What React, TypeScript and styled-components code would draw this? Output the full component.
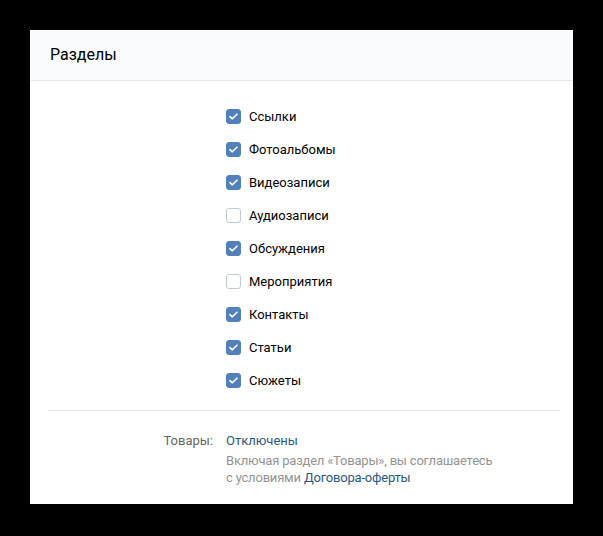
import React from 'react'
import styled, { createGlobalStyle } from 'styled-components'

const GlobalStyle = createGlobalStyle`
  html, body {
    margin: 0;
    padding: 0;
    background: #000;
  }
  body {
    font-family: Roboto, "Open Sans", "Liberation Sans", sans-serif;
    -webkit-font-smoothing: antialiased;
  }
`

const Screen = styled.div`
  width: 603px;
  height: 536px;
  padding: 30px 30px 32px 30px;
  box-sizing: border-box;
`

const Panel = styled.div`
  width: 543px;
  height: 474px;
  background: #fff;
  display: flex;
  flex-direction: column;
`

const Header = styled.div`
  height: 51px;
  box-sizing: border-box;
  background: #fafbfc;
  border-bottom: 1px solid #e7e8ec;
  display: flex;
  align-items: center;
  padding: 0 20px 2px;
  font-size: 16px;
  color: #000;
`

const Body = styled.div`
  padding: 19px 13px 0 18px;
  display: flex;
  flex-direction: column;
`

const CheckList = styled.div`
  display: flex;
  flex-direction: column;
  padding-left: 178px;
`

const CheckRow = styled.label`
  height: 33px;
  display: flex;
  align-items: center;
  gap: 8px;
  font-size: 13px;
  color: #000;
  cursor: pointer;
`

const Box = styled.span<{ $checked: boolean }>`
  width: 15px;
  height: 15px;
  box-sizing: border-box;
  border-radius: 3px;
  display: flex;
  align-items: center;
  justify-content: center;
  background: ${({ $checked }) => ($checked ? '#5181b8' : '#fff')};
  border: 1px solid ${({ $checked }) => ($checked ? '#5181b8' : '#c1c9d1')};
`

const Divider = styled.div`
  height: 1px;
  background: #e7e8ec;
  margin-top: 13px;
`

const InfoRow = styled.div`
  display: flex;
  padding-top: 21px;
  font-size: 13px;
`

const InfoLabel = styled.div`
  width: 178px;
  padding-right: 13px;
  box-sizing: border-box;
  text-align: right;
  color: #656565;
  line-height: 17px;
`

const InfoValue = styled.div`
  display: flex;
  flex-direction: column;
`

const Link = styled.a`
  color: #2a5885;
  text-decoration: none;
  line-height: 17px;
`

const Note = styled.div`
  margin-top: 4px;
  color: #939393;
  line-height: 16px;
  letter-spacing: -0.2px;
  width: 270px;
`

const sections: [string, boolean][] = [
  ['Ссылки', true],
  ['Фотоальбомы', true],
  ['Видеозаписи', true],
  ['Аудиозаписи', false],
  ['Обсуждения', true],
  ['Мероприятия', false],
  ['Контакты', true],
  ['Статьи', true],
  ['Сюжеты', true],
]

function Checkbox({ checked }: { checked: boolean }) {
  return (
    <Box $checked={checked}>
      {checked && (
        <svg width="9" height="7" viewBox="0 0 9 7" fill="none">
          <path d="M1 3.6L3.3 5.8L8 1.2" stroke="#fff" strokeWidth="1.6" strokeLinecap="round" strokeLinejoin="round" />
        </svg>
      )}
    </Box>
  )
}

export default function App() {
  return (
    <Screen>
      <GlobalStyle />
      <Panel>
        <Header>Разделы</Header>
        <Body>
          <CheckList>
            {sections.map(([name, checked]) => (
              <CheckRow key={name}>
                <Checkbox checked={checked} />
                {name}
              </CheckRow>
            ))}
          </CheckList>
          <Divider />
          <InfoRow>
            <InfoLabel>Товары:</InfoLabel>
            <InfoValue>
              <Link href="#">Отключены</Link>
              <Note>
                Включая раздел «Товары», вы соглашаетесь с условиями <Link href="#">Договора-оферты</Link>
              </Note>
            </InfoValue>
          </InfoRow>
        </Body>
      </Panel>
    </Screen>
  )
}
